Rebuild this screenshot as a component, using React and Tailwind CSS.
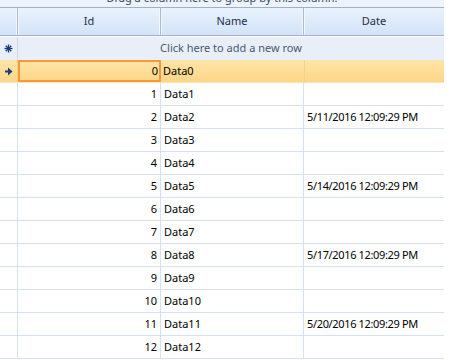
import React from 'react'

const rows = Array.from({ length: 13 }, (_, i) => ({
  id: i,
  name: 'Data' + i,
  date: i % 3 === 2 ? `5/${9 + i}/2016 12:09:29 PM` : '',
}))

const font = { fontFamily: '"Noto Sans", "Open Sans", sans-serif' }

function NewRowGlyph() {
  return (
    <svg width="9" height="9" viewBox="0 0 9 9">
      <g stroke="#1d3b78" strokeWidth="1.3">
        <line x1="4.5" y1="0.5" x2="4.5" y2="8.5" />
        <line x1="0.5" y1="4.5" x2="8.5" y2="4.5" />
        <line x1="1.7" y1="1.7" x2="7.3" y2="7.3" />
        <line x1="7.3" y1="1.7" x2="1.7" y2="7.3" />
      </g>
    </svg>
  )
}

function CurrentGlyph() {
  return (
    <svg width="8" height="9" viewBox="0 0 8 9">
      <path d="M0 3.5h3V0.5L7.5 4.5 3 8.5V5.5H0z" fill="#1d3b78" />
    </svg>
  )
}

export default function App() {
  return (
    <div className="h-screen w-full overflow-hidden bg-white text-[11px] text-black" style={font}>
      <div className="w-[444px]">
        {/* Group panel, scrolled mostly out of view */}
        <div className="-mt-[22px] flex h-[30px] items-end justify-center border-b border-[#9bb2cb] bg-[#eef3fb] pb-[1px] text-[#3a4a66]">
          Drag a column here to group by this column.
        </div>

        {/* Header */}
        <div className="grid h-[28px] grid-cols-[18px_143px_143px_140px] border-b border-[#9bb2cb] bg-gradient-to-b from-[#eaf2fd] to-[#d2e3f8] text-[#1f2d4d]">
          <div className="border-r border-r-[#aab9cc] shadow-[inset_-1px_0_0_#f4f8fe]" />
          <div className="flex items-center justify-center border-r border-r-[#aab9cc] shadow-[inset_1px_0_0_#f4f8fe,inset_-1px_0_0_#f4f8fe]">Id</div>
          <div className="flex items-center justify-center border-r border-r-[#aab9cc] shadow-[inset_1px_0_0_#f4f8fe,inset_-1px_0_0_#f4f8fe]">Name</div>
          <div className="flex items-center justify-center shadow-[inset_1px_0_0_#f4f8fe]">Date</div>
        </div>

        {/* New row */}
        <div className="grid h-[24px] grid-cols-[18px_426px] border-t border-white bg-[#e9eff9]">
          <div className="flex items-center justify-center border-r border-[#c9d8ec]">
            <NewRowGlyph />
          </div>
          <div className="flex items-center justify-center text-[#4a586e]">Click here to add a new row</div>
        </div>

        {/* Data rows */}
        {rows.map((r) => {
          const current = r.id === 0
          return (
            <div
              key={r.id}
              className={
                current
                  ? 'grid h-[23px] grid-cols-[18px_143px_143px_140px] border-b border-[#fbe7a8] bg-gradient-to-b from-[#fee5a8] to-[#fdd587]'
                  : 'grid h-[23px] grid-cols-[18px_143px_143px_140px] border-b border-[#d4e1f2]'
              }
            >
              <div className={current ? 'flex items-center justify-center border-r border-[#f3d08a]' : 'border-r border-[#d4e1f2]'}>
                {current && <CurrentGlyph />}
              </div>
              <div
                className={
                  current
                    ? 'flex items-center justify-end border-2 border-[#f8983c] pr-[1px]'
                    : 'flex items-center justify-end border-r border-[#d4e1f2] pr-[3px]'
                }
              >
                {r.id}
              </div>
              <div className={current ? 'flex items-center pl-[2px]' : 'flex items-center border-r border-[#d4e1f2] pl-[3px]'}>
                {r.name}
              </div>
              <div
                className={
                  current
                    ? 'flex items-center border-l border-[#f3d08a] pl-[3px] tracking-[-0.35px]'
                    : 'flex items-center pl-[3px] tracking-[-0.35px]'
                }
              >
                {r.date}
              </div>
            </div>
          )
        })}
      </div>
    </div>
  )
}
